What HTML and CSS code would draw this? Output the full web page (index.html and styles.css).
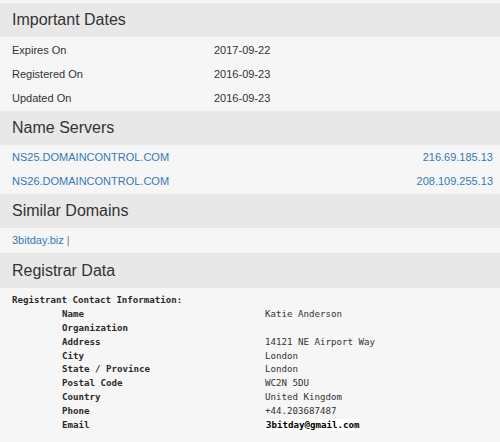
FILE: index.html
```html
<!DOCTYPE html>
<html>
<head>
<meta charset="utf-8">
<link rel="stylesheet" href="styles.css">
</head>
<body>
<div class="page">
  <section class="section">
    <h2 class="sec-head">Important Dates</h2>
    <div class="sec-body dates">
      <div class="row"><span class="label">Expires On</span><span class="value">2017-09-22</span></div>
      <div class="row"><span class="label">Registered On</span><span class="value">2016-09-23</span></div>
      <div class="row"><span class="label">Updated On</span><span class="value">2016-09-23</span></div>
    </div>
  </section>
  <section class="section">
    <h2 class="sec-head">Name Servers</h2>
    <div class="sec-body">
      <div class="row ns"><a class="link" href="#">NS25.DOMAINCONTROL.COM</a><a class="link" href="#">216.69.185.13</a></div>
      <div class="row ns"><a class="link" href="#">NS26.DOMAINCONTROL.COM</a><a class="link" href="#">208.109.255.13</a></div>
    </div>
  </section>
  <section class="section">
    <h2 class="sec-head">Similar Domains</h2>
    <div class="sec-body">
      <div class="row"><a class="link" href="#">3bitday.biz</a>&nbsp;<span class="sep">|</span></div>
    </div>
  </section>
  <section class="section">
    <h2 class="sec-head">Registrar Data</h2>
    <div class="whois">
      <div class="whois-title">Registrant Contact Information:</div>
      <div class="whois-grid">
        <span class="w-label">Name</span><span class="w-value">Katie Anderson</span>
        <span class="w-label">Organization</span><span class="w-value"></span>
        <span class="w-label">Address</span><span class="w-value">14121 NE Airport Way</span>
        <span class="w-label">City</span><span class="w-value">London</span>
        <span class="w-label">State / Province</span><span class="w-value">London</span>
        <span class="w-label">Postal Code</span><span class="w-value">WC2N 5DU</span>
        <span class="w-label">Country</span><span class="w-value">United Kingdom</span>
        <span class="w-label">Phone</span><span class="w-value">+44.203687487</span>
        <span class="w-label">Email</span><span class="w-value"><span class="email">3bitday@gmail.com</span></span>
      </div>
    </div>
  </section>
</div>
</body>
</html>
```

FILE: styles.css
```css
html, body {
  margin: 0;
  padding: 0;
  background: #f6f6f6;
}
body {
  font-family: "Liberation Sans", Arial, sans-serif;
  color: #333;
}
.page {
  padding-top: 3px;
}
.sec-head {
  margin: 0;
  height: 34px;
  line-height: 34px;
  padding: 0 12px;
  background: #e8e8e8;
  font-size: 16px;
  font-weight: normal;
  color: #333;
}
.section:last-child .sec-head {
  height: 35px;
  line-height: 35px;
}
.sec-body {
  padding: 0 7px 1px 12px;
  font-size: 11px;
}
.sec-body.dates {
  padding-top: 1px;
}
.row {
  display: flex;
  align-items: center;
  height: 24px;
}
.label {
  width: 202px;
}
.ns {
  justify-content: space-between;
}
.link {
  color: #337ab7;
  text-decoration: none;
}
.sep {
  color: #7a7a7a;
}
.whois {
  padding: 6px 12px 0;
  font-family: "DejaVu Sans Mono", "Liberation Mono", monospace;
  font-size: 9.13px;
  line-height: 13.9px;
  color: #333;
}
.whois-title {
  font-weight: bold;
  color: #2b2b2b;
  white-space: nowrap;
}
.whois-grid {
  display: grid;
  grid-template-columns: 203px auto;
  grid-auto-rows: 13.9px;
  margin-left: 50px;
}
.w-label {
  font-weight: bold;
  color: #2b2b2b;
  white-space: nowrap;
}
.w-value {
  white-space: nowrap;
}
.email {
  background: #fff;
  color: #000;
  font-weight: bold;
  padding: 1px 1px;
}
```
